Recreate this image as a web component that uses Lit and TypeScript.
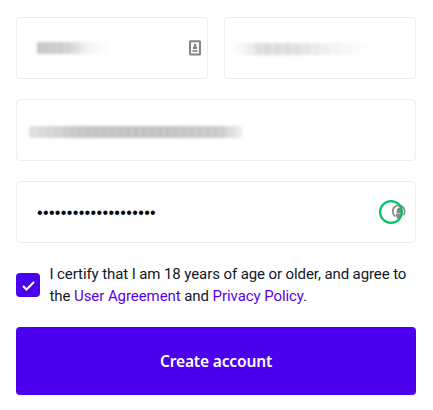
import { LitElement, html, css } from "lit";
import { customElement } from "lit/decorators.js";

@customElement("app-root")
export class AppRoot extends LitElement {
  static styles = css`
    :host {
      display: block;
      box-sizing: border-box;
      height: 410px;
      padding: 17px 17px 0 16px;
      background: #fff;
      color: #101828;
      font-family: Roboto, "Liberation Sans", sans-serif;
    }
    .fields {
      display: grid;
      grid-template-columns: 1fr 1fr;
      gap: 20px 16px;
    }
    .field {
      box-sizing: border-box;
      height: 62px;
      border: 1px solid #e9eef0;
      border-radius: 4px;
      display: flex;
      align-items: center;
      justify-content: space-between;
      padding: 0 6px 0 12px;
    }
    .wide {
      grid-column: 1 / -1;
    }
    .secret {
      padding: 0 9px 0 20px;
    }
    .blurred {
      display: block;
      filter: blur(1.8px);
    }
    .first {
      width: 72px;
      height: 12px;
      margin-left: 8px;
      background:
        repeating-linear-gradient(90deg, #fff0 0 4px, #ffffff28 5px 7px),
        linear-gradient(90deg, #c4c4c4, #d2d2d2 45%, #f1f1f1 68%, #fff);
    }
    .last {
      width: 136px;
      height: 12px;
      margin: 2px 0 0 -3px;
      background:
        repeating-linear-gradient(90deg, #fff0 0 6px, #ffffff48 8px 10px),
        linear-gradient(90deg, #fbfbfb, #f2f2f2 9%, #d8dada 20%, #dcdddd 42%, #efefef 68%, #fff);
    }
    .mail {
      width: 213px;
      height: 12px;
      margin-top: 3px;
      background:
        repeating-linear-gradient(90deg, #fff0 0 5px, #ffffff28 6px 8px),
        linear-gradient(90deg, #e0e0e0, #c2c3c4 25%, #bebfc0 60%, #c8cacb 90%, #f0f0f0);
    }
    .dots {
      margin-top: 2px;
      font: 16px/20px "Liberation Sans", sans-serif;
      letter-spacing: 0.35px;
      color: #000c1c;
    }
    svg {
      display: block;
      flex: none;
    }
    .consent {
      display: flex;
      align-items: center;
      gap: 10px;
      height: 44px;
      margin-top: 20px;
    }
    .box {
      flex: none;
      width: 24px;
      height: 24px;
      border-radius: 4px;
      background: #4b00ee;
    }
    .terms {
      margin-left: -0.5px;
      font-size: 15px;
      line-height: 22px;
      letter-spacing: -0.095px;
      white-space: nowrap;
    }
    .line {
      display: block;
    }
    .follow {
      letter-spacing: -0.075px;
    }
    .link {
      color: #5b00ea;
      text-decoration: none;
    }
    .submit {
      display: block;
      width: 100%;
      height: 68px;
      margin: 20px 0 0;
      padding: 0;
      border: 0;
      border-radius: 4px;
      background: #4b00ee;
      color: #fff;
      font: 600 15.5px/24px "Noto Sans", sans-serif;
      letter-spacing: -0.14px;
    }
  `;

  render() {
    return html`
      <div class="fields">
        <div class="field">
          <span class="blurred first"></span>
          <svg width="12" height="16" viewBox="0 0 12 16">
            <rect x="1" y="1.25" width="10" height="13.25" rx=".5" fill="#fafafa" stroke="#858585" stroke-width="2" />
            <path d="M5 4h2v2l1 1v2H4V7l1-1z" fill="#858585" />
            <path d="M3.5 10h5v2h-5z" fill="#999" />
          </svg>
        </div>
        <div class="field"><span class="blurred last"></span></div>
        <div class="field wide"><span class="blurred mail"></span></div>
        <div class="field wide secret">
          <span class="dots">${"•".repeat(20)}</span>
          <svg width="27" height="24" viewBox="0 0 27 24">
            <path d="M16.5 16.5A6 6 0 1 1 24.5 15" fill="none" stroke="#858585" stroke-width="1.7" />
            <path d="M17.5 13.5q0-6 2.8-6t2.8 6z" fill="#858585" />
            <path d="M17 14h6.5v1.7h-2v3h-3.5v-2h-1z" fill="#8c8c8c" />
            <circle cx="12" cy="12" r="10.9" fill="none" stroke="#06c167" stroke-width="2.2" />
          </svg>
        </div>
      </div>
      <div class="consent">
        <span class="box">
          <svg width="24" height="24" viewBox="0 0 24 24">
            <path d="M7 13l3.5 3.5L18 9" fill="none" stroke="#fff" stroke-width="2" />
          </svg>
        </span>
        <div class="terms">
          <span class="line">I certify that I am 18 years of age or older, and agree to</span>
          <span class="line follow">the <a class="link">User Agreement</a> and <a class="link">Privacy Policy</a>.</span>
        </div>
      </div>
      <button class="submit">Create account</button>
    `;
  }
}
